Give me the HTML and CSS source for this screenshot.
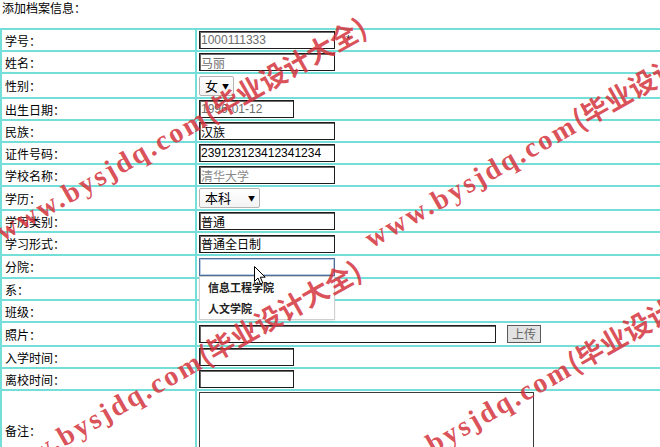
FILE: index.html
```html
<!DOCTYPE html>
<html lang="zh-CN">
<head>
<meta charset="utf-8">
<title>添加档案信息</title>
<link rel="stylesheet" href="styles.css">
</head>
<body>
<div class="page">
  <div class="title">添加档案信息：</div>
  <table class="form">
    <tr class="h22">
      <td class="label">学号：</td>
      <td class="value"><div class="field"><input class="txt ro" value="1000111333" readonly><span class="req">*</span></div></td>
    </tr>
    <tr class="h22">
      <td class="label">姓名：</td>
      <td class="value"><div class="field"><input class="txt ro" value="马丽" readonly></div></td>
    </tr>
    <tr class="h25">
      <td class="label">性别：</td>
      <td class="value"><div class="field"><span class="sel sel-sm"><select><option>女</option><option>男</option></select></span></div></td>
    </tr>
    <tr class="h22">
      <td class="label">出生日期：</td>
      <td class="value"><div class="field"><input class="txt short ro" value="1996-01-12" readonly></div></td>
    </tr>
    <tr class="h22">
      <td class="label">民族：</td>
      <td class="value"><div class="field"><input class="txt" value="汉族"></div></td>
    </tr>
    <tr class="h22">
      <td class="label">证件号码：</td>
      <td class="value"><div class="field"><input class="txt" value="239123123412341234"></div></td>
    </tr>
    <tr class="h22">
      <td class="label">学校名称：</td>
      <td class="value"><div class="field"><input class="txt ro light" value="清华大学" readonly></div></td>
    </tr>
    <tr class="h24">
      <td class="label">学历：</td>
      <td class="value"><div class="field"><span class="sel sel-md"><select><option>本科</option><option>专科</option></select></span></div></td>
    </tr>
    <tr class="h22">
      <td class="label">学历类别：</td>
      <td class="value"><div class="field"><input class="txt" value="普通"></div></td>
    </tr>
    <tr class="h23">
      <td class="label">学习形式：</td>
      <td class="value"><div class="field"><input class="txt" value="普通全日制"></div></td>
    </tr>
    <tr class="h23">
      <td class="label">分院：</td>
      <td class="value">
        <div class="field combo">
          <input class="txt focus" value="">
          <ul class="options">
            <li>信息工程学院</li>
            <li>人文学院</li>
          </ul>
          <svg class="pointer" width="13" height="19" viewBox="0 0 13 19">
            <path d="M0.5 0.5 L0.5 15.5 L4 12 L6.5 18 L8.8 17 L6.3 11.2 L11.2 11.2 Z" fill="#fff" stroke="#000" stroke-width="1" stroke-linejoin="miter"/>
          </svg>
        </div>
      </td>
    </tr>
    <tr class="h22">
      <td class="label">系：</td>
      <td class="value"><div class="field"></div></td>
    </tr>
    <tr class="h22">
      <td class="label">班级：</td>
      <td class="value"><div class="field"></div></td>
    </tr>
    <tr class="h24">
      <td class="label">照片：</td>
      <td class="value"><div class="field"><input class="txt path" value=""><button class="upload" type="button">上传</button></div></td>
    </tr>
    <tr class="h22">
      <td class="label">入学时间：</td>
      <td class="value"><div class="field"><input class="txt short" value=""></div></td>
    </tr>
    <tr class="h22">
      <td class="label">离校时间：</td>
      <td class="value"><div class="field"><input class="txt short" value=""></div></td>
    </tr>
    <tr class="h80">
      <td class="label">备注：</td>
      <td class="value"><div class="field"><textarea class="memo"></textarea></div></td>
    </tr>
  </table>

  <div class="watermarks" aria-hidden="true">
    <span class="wm wm-a"><span class="wm-en">www.bysjdq.com</span><span class="wm-cn">(毕业设计大全)</span></span>
    <span class="wm wm-b"><span class="wm-en">www.bysjdq.com</span><span class="wm-cn">(毕业设计大全)</span></span>
    <span class="wm wm-c"><span class="wm-en">www.bysjdq.com</span><span class="wm-cn">(毕业设计大全)</span></span>
    <span class="wm wm-d"><span class="wm-en">www.bysjdq.com</span><span class="wm-cn">(毕业设计大全)</span></span>
  </div>
</div>
</body>
</html>
```

FILE: styles.css
```css
html, body {
  margin: 0;
  padding: 0;
  background: #fff;
  overflow: hidden;
}

.page {
  position: relative;
  width: 660px;
  height: 447px;
  overflow: hidden;
  font-family: "Noto Sans CJK SC", "Liberation Sans", sans-serif;
  font-size: 12px;
  color: #000;
}

.title {
  line-height: 16px;
  padding: 0 2px;
  margin-bottom: 12px;
}

/* archive form table */
.form {
  width: 800px;
  table-layout: fixed;
  border-collapse: separate;
  border-spacing: 0;
  border: 1px solid #74dfd8;
}

.form td {
  border: 1px solid #74dfd8;
  padding: 0 1px;
  vertical-align: middle;
}

.form td.label {
  width: 188px;
  padding: 0 2px 0 3px;
  white-space: nowrap;
}

.form td.value {
  padding: 0 2px;
}

.h22 td { height: 20px; }
.h23 td { height: 21px; }
.h24 td { height: 22px; }
.h25 td { height: 23px; }
.h80 td { height: 78px; }

.field {
  display: flex;
  align-items: center;
  min-height: 18px;
}

/* text inputs */
.txt {
  box-sizing: border-box;
  width: 136px;
  height: 18px;
  margin: 0;
  padding: 0 1px;
  border: 1px solid #1c1c1c;
  box-shadow: inset 1px 1px 0 #6a6a6a;
  background: #fff;
  font-family: "Liberation Sans", "Noto Sans CJK SC", sans-serif;
  font-size: 12px;
  color: #000;
  outline: none;
}

.txt.ro { color: #6c6c6c; }
.txt.light { color: #8a8a8a; }
.txt.short { width: 95px; }
.txt.path { width: 297px; }

.txt.focus {
  border: 1px solid #4f6f9a;
  box-shadow: inset 0 0 0 1px #b9cde6;
}

.req {
  margin-left: 11px;
  font-family: "Liberation Sans", sans-serif;
  font-size: 12px;
}

/* select boxes */
.sel {
  position: relative;
  display: inline-block;
}

.sel select {
  appearance: none;
  -webkit-appearance: none;
  box-sizing: border-box;
  height: 20px;
  margin: 0;
  padding: 0 0 0 5px;
  border: 1px solid #b4b4b4;
  border-radius: 2px;
  background: linear-gradient(#ffffff, #f3f3f3);
  font-family: "Noto Sans CJK SC", sans-serif;
  font-size: 13px;
  line-height: 18px;
  color: #000;
}

.sel-sm select { width: 35px; }
.sel-md select { width: 61px; }

.sel::after {
  content: "▼";
  position: absolute;
  right: 5px;
  top: 5px;
  font-size: 7px;
  line-height: 10px;
  color: #000;
  pointer-events: none;
}

/* open suggestion list under the college field */
.combo {
  position: relative;
}

.options {
  position: absolute;
  left: 0;
  top: 18px;
  z-index: 2;
  box-sizing: border-box;
  width: 136px;
  margin: 0;
  padding: 0;
  list-style: none;
  background: #fff;
  border: 1px solid #cfcfcf;
  box-shadow: 0 1px 2px rgba(0, 0, 0, 0.08);
}

.options li {
  height: 21px;
  line-height: 21px;
  padding-left: 8px;
  font-size: 11px;
  font-weight: bold;
  color: #222;
}

.pointer {
  position: absolute;
  left: 55px;
  top: 8px;
  z-index: 3;
}

/* upload button */
.upload {
  box-sizing: border-box;
  width: 34px;
  height: 18px;
  margin: 0 0 0 11px;
  padding: 0;
  border: 1px solid #5a5a5a;
  background: #e2e2e2;
  font-family: "Noto Sans CJK SC", sans-serif;
  font-size: 12px;
  line-height: 16px;
  color: #666;
}

.memo {
  box-sizing: border-box;
  width: 335px;
  height: 76px;
  margin: 0;
  border: 1px solid #3a3a3a;
  resize: none;
  background: #fff;
}

/* repeated site watermark */
.watermarks {
  position: absolute;
  inset: 0;
  z-index: 5;
  pointer-events: none;
}

.wm {
  position: absolute;
  white-space: nowrap;
  line-height: 32px;
  color: rgba(212, 50, 60, 0.86);
  font-weight: bold;
  transform-origin: 0 100%;
  transform: rotate(-29.5deg);
}

.wm-en {
  font-family: "Liberation Serif", serif;
  font-size: 28px;
  letter-spacing: 2.5px;
}

.wm-cn {
  font-family: "Noto Sans CJK SC", sans-serif;
  font-size: 27px;
}

.wm-a { left: 8px; top: 213px; }
.wm-b { left: 377px; top: 220px; }
.wm-c { left: 3px; top: 456px; }
.wm-d { left: 372px; top: 463px; }
```
